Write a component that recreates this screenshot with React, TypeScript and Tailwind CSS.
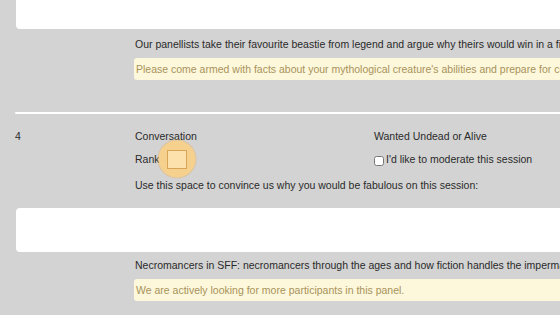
import React from 'react';

const Notice: React.FC<{ children: React.ReactNode }> = ({ children }) => (
  <div className="mt-[7px] -ml-[1px] rounded-[3px] bg-[#fdf7dc] pl-[2px] py-[4px] text-[#a8935a] leading-[14px] whitespace-nowrap">
    {children}
  </div>
);

export default function App() {
  return (
    <div
      className="w-[560px] h-[315px] overflow-hidden bg-[#d3d3d3] text-[10.5px] text-[#2a2a2a]"
      style={{ fontFamily: '"Liberation Sans", Arial, sans-serif' }}
    >
      <div className="w-[820px] pl-[15px]">
        {/* previous session, tail end */}
        <div className="ml-[1px] h-[29px] rounded-b-[4px] bg-white" />
        <div className="pl-[120px] pt-[8px]">
          <p className="leading-[14px] whitespace-nowrap">
            Our panellists take their favourite beastie from legend and argue why theirs would win in a fight against all the others.
          </p>
          <Notice>
            Please come armed with facts about your mythological creature's abilities and prepare for combat, on stage.
          </Notice>
        </div>

        <div className="mt-[32px] h-[2px] rounded-full bg-white" />

        {/* session 4 */}
        <div className="mt-[15px] flex">
          <div className="w-[120px] leading-[14px]">4</div>
          <div className="flex-1">
            <div className="grid grid-cols-[239px_1fr] leading-[14px]">
              <div>Conversation</div>
              <div>Wanted Undead or Alive</div>
            </div>
            <div className="grid grid-cols-[239px_1fr] mt-[4px]">
              <div className="flex items-center h-[24px]">
                <span className="leading-[14px]">Rank</span>
                <span className="relative ml-[7px] inline-flex h-[19px] w-[20px] items-center justify-center">
                  <span className="absolute left-1/2 top-1/2 h-[37px] w-[37px] -translate-x-1/2 -translate-y-1/2 rounded-full bg-[#fbcf80]/85 ring-1 ring-[#e9b364]/50" />
                  <input
                    type="text"
                    className="relative h-[19px] w-[20px] border border-[#d8a457] bg-[#fde1ad] outline-none"
                  />
                </span>
              </div>
              <label className="flex items-center h-[24px] gap-[2px]">
                <input type="checkbox" className="h-[10px] w-[10px] mt-[4px] accent-white" />
                <span className="leading-[14px]">I'd like to moderate this session</span>
              </label>
            </div>
            <p className="mt-[7px] leading-[14px]">Use this space to convince us why you would be fabulous on this session:</p>
          </div>
        </div>

        <div className="ml-[1px] mt-[16px] h-[44px] rounded-[4px] bg-white" />

        <div className="pl-[120px] pt-[6px]">
          <p className="leading-[14px] whitespace-nowrap">
            Necromancers in SFF: necromancers through the ages and how fiction handles the impermanence of death.
          </p>
          <Notice>We are actively looking for more participants in this panel.</Notice>
        </div>
      </div>
    </div>
  );
}
